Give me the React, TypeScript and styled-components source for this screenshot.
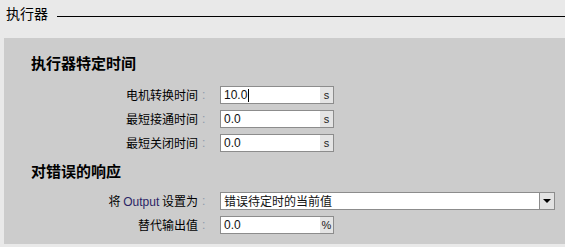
import React from 'react';
import styled, {createGlobalStyle} from 'styled-components';

const GlobalStyle = createGlobalStyle`
  body {
    margin: 0;
    background: #e9e9e9;
    font-family: "Noto Sans CJK SC", "Liberation Sans", sans-serif;
    color: #000000;
  }
`;

const Root = styled.div`
  width: 565px;
  height: 247px;
  overflow: hidden;
  background: #e9e9e9;
`;

const TitleBar = styled.div`
  display: flex;
  align-items: center;
  height: 26px;
  padding: 0 0 0 6px;
  margin-bottom: 12px;
`;

const Title = styled.span`
  font-size: 14px;
  line-height: 26px;
  margin-top: 0px;
`;

const TitleLine = styled.div`
  flex: 1;
  height: 1px;
  background: #000000;
  margin-left: 9px;
  margin-top: 6px;
`;

const Panel = styled.div`
  margin-left: 4px;
  background: #cccccc;
  padding: 16px 10px 10px 27px;
`;

const SectionHeading = styled.div<{$gap: number}>`
  font-size: 15px;
  font-weight: bold;
  line-height: 18px;
  height: 18px;
  margin-top: ${p => p.$gap}px;
`;

const Row = styled.div<{$gap: number}>`
  display: flex;
  align-items: center;
  height: 18px;
  margin-top: ${p => p.$gap}px;
`;

const Label = styled.span`
  width: 167px;
  text-align: right;
  font-size: 12px;
  line-height: 18px;
  white-space: nowrap;
`;

const Latin = styled.span`
  font-family: "Liberation Sans", sans-serif;
  color: #2b2566;
`;

const Colon = styled.span`
  width: 22px;
  padding-left: 4px;
  box-sizing: border-box;
  font-size: 12px;
  color: #8c98aa;
  font-family: "Liberation Sans", sans-serif;
  line-height: 18px;
`;

const Field = styled.div<{$width: number}>`
  display: flex;
  width: ${p => p.$width}px;
  height: 18px;
  box-sizing: border-box;
  border: 1px solid #8c8c8c;
  background: #ffffff;
`;

const Value = styled.div<{$cjk?: boolean}>`
  flex: 1;
  display: flex;
  align-items: center;
  padding-left: 3px;
  font-family: ${p => (p.$cjk ? '"Noto Sans CJK SC", sans-serif' : '"Liberation Sans", sans-serif')};
  font-size: 12px;
  line-height: 16px;
  color: #111111;
`;

const Caret = styled.span`
  display: inline-block;
  width: 1px;
  height: 13px;
  background: #000000;
  margin-left: 1px;
`;

const Unit = styled.div`
  width: 13px;
  background: #e4e4e4;
  display: flex;
  align-items: center;
  justify-content: center;
  font-family: "Liberation Sans", sans-serif;
  font-size: 11px;
  color: #222222;
`;

const DropButton = styled.div`
  width: 14px;
  border-left: 1px solid #8c8c8c;
  background: #e2e2e2;
  display: flex;
  align-items: center;
  justify-content: center;
`;

const Arrow = styled.span`
  width: 0;
  height: 0;
  border-left: 4px solid transparent;
  border-right: 4px solid transparent;
  border-top: 4px solid #000000;
`;

const TimeRow: React.FC<{label: string; value: string; gap: number; caret?: boolean}> = ({label, value, gap, caret}) => (
    <Row $gap={gap}>
        <Label>{label}</Label>
        <Colon>:</Colon>
        <Field $width={114}>
            <Value>{value}{caret && <Caret/>}</Value>
            <Unit>s</Unit>
        </Field>
    </Row>
);

const App: React.FC = () => {
    return (
        <Root>
            <GlobalStyle/>
            <TitleBar>
                <Title>执行器</Title>
                <TitleLine/>
            </TitleBar>
            <Panel>
                <SectionHeading $gap={0}>执行器特定时间</SectionHeading>
                <TimeRow label="电机转换时间" value="10.0" gap={14} caret/>
                <TimeRow label="最短接通时间" value="0.0" gap={6}/>
                <TimeRow label="最短关闭时间" value="0.0" gap={6}/>
                <SectionHeading $gap={10}>对错误的响应</SectionHeading>
                <Row $gap={12}>
                    <Label>将 <Latin>Output</Latin> 设置为</Label>
                    <Colon>:</Colon>
                    <Field $width={335}>
                        <Value $cjk>错误待定时的当前值</Value>
                        <DropButton><Arrow/></DropButton>
                    </Field>
                </Row>
                <Row $gap={6}>
                    <Label>替代输出值</Label>
                    <Colon>:</Colon>
                    <Field $width={114}>
                        <Value>0.0</Value>
                        <Unit>%</Unit>
                    </Field>
                </Row>
            </Panel>
        </Root>
    );
};

export default App;
